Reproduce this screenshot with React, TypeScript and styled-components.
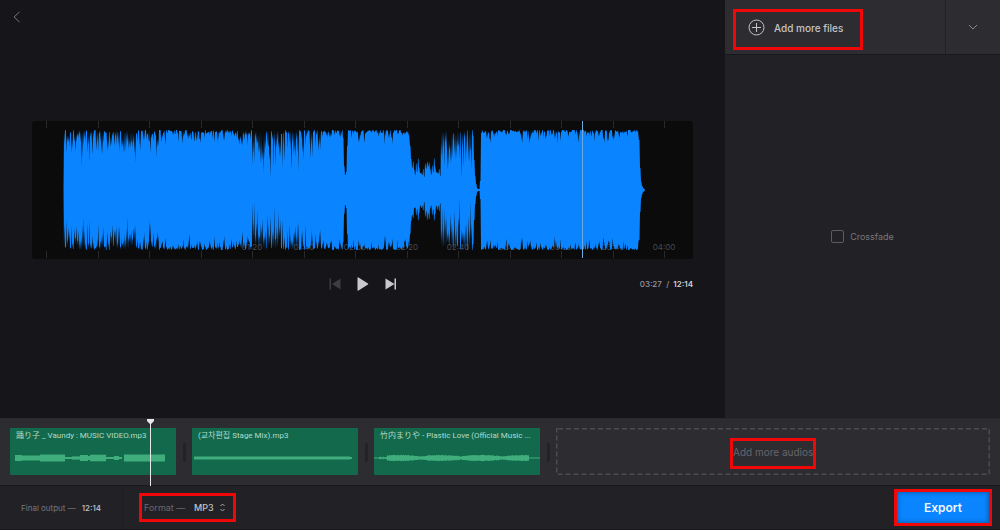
import React from "react";
import styled, { createGlobalStyle } from "styled-components";

const color = {
  editor: "#16151a",
  panel: "#222126",
  raised: "#2d2c31",
  line: "#19181d",
  well: "#0b0b0c",
  blue: "#0a84ff",
  clip: "#12694c",
  clipWave: "#3fae7c",
  muted: "#66656b",
  text: "#c4c4c7",
  mark: "#f00808",
};

const GlobalStyle = createGlobalStyle`
  * { box-sizing: border-box; }
  body {
    margin: 0;
    background: ${color.editor};
    color: ${color.text};
    font-family: Inter, "Noto Sans CJK JP", "Noto Sans CJK KR", sans-serif;
    font-size: 9px;
    line-height: 12px;
  }
  button, select, input { font: inherit; color: inherit; margin: 0; }
  button { border: 0; background: none; padding: 0; cursor: pointer; }
`;

const Page = styled.div`
  min-height: 100vh;
  display: flex;
  flex-direction: column;
`;

const Workspace = styled.div`
  flex: 1;
  display: grid;
  grid-template-columns: minmax(0, 1fr) 275px;
`;

const Editor = styled.main`
  display: grid;
  grid-template-rows: 34px 1fr 34px;
`;

const BackButton = styled.button`
  width: 34px;
  display: grid;
  place-items: center;
  color: #77767b;
`;

const Player = styled.section`
  align-self: center;
  padding: 0 32px;
  display: flex;
  flex-direction: column;
  gap: 12px;
`;

const WaveView = styled.svg`
  display: block;
  width: 100%;
  height: auto;
  background: ${color.well};
  border-radius: 3px;
`;

const PlayerBar = styled.div`
  height: 26px;
  display: grid;
  grid-template-columns: 1fr auto 1fr;
  align-items: center;
`;

const Transport = styled.div`
  grid-column: 2;
  display: flex;
  align-items: center;
  gap: 12px;
`;

const TransportButton = styled.button`
  display: grid;
  place-items: center;
  width: 16px;
  height: 16px;
  color: #c9c9cb;
  &:disabled { color: #3d3c41; }
`;

const Time = styled.div`
  justify-self: end;
  font-size: 8px;
  font-weight: 500;
  color: #98979c;
  white-space: pre;
  strong { font-weight: 600; color: #d2d2d4; }
`;

const Sidebar = styled.aside`
  display: flex;
  flex-direction: column;
  background: ${color.panel};
`;

const SidebarHeader = styled.div`
  height: 55px;
  display: flex;
  background: ${color.raised};
  border-bottom: 1px solid ${color.line};
`;

const AddArea = styled.div`
  flex: 1;
  padding: 9px 8px 4px;
`;

const Callout = styled.div<{ $w: number; $h: number }>`
  width: ${(p) => p.$w}px;
  height: ${(p) => p.$h}px;
  border: 3px solid ${color.mark};
  display: flex;
  align-items: center;
`;

const AddFilesButton = styled.button`
  flex: 1;
  height: 100%;
  padding: 0 0 4px 12px;
  display: flex;
  align-items: center;
  gap: 9px;
  font-size: 10px;
  font-weight: 500;
`;

const ExpandButton = styled.button`
  width: 55px;
  border-left: 1px solid #222126;
  display: grid;
  place-items: center;
  color: #8a898e;
`;

const Options = styled.div`
  flex: 1;
  display: grid;
  place-items: center;
`;

const CheckLabel = styled.label`
  display: flex;
  align-items: center;
  gap: 6px;
  color: #77767b;
`;

const CheckBox = styled.input`
  appearance: none;
  width: 13px;
  height: 13px;
  border: 1px solid #5d5c62;
  border-radius: 2px;
  &:checked { background: ${color.blue}; }
`;

const Timeline = styled.section`
  position: relative;
  display: flex;
  height: 68px;
  padding: 9px 10px;
  background: ${color.raised};
  border-top: 1px solid #29282d;
  border-bottom: 1px solid ${color.line};
`;

const Clip = styled.article`
  flex: 0 0 166px;
  height: 47px;
  background: ${color.clip};
  border-radius: 1px;
  overflow: hidden;
`;

const ClipTitle = styled.div`
  padding: 2px 6px;
  font-family: Roboto, "Noto Sans CJK JP", "Noto Sans CJK KR", sans-serif;
  font-size: 8px;
  color: #b4dbc9;
  white-space: nowrap;
`;

const ClipWave = styled.svg`
  display: block;
  width: 100%;
  height: 30px;
  fill: ${color.clipWave};
`;

const Handle = styled.div`
  flex: 0 0 16px;
  display: grid;
  place-items: center;
  &::before {
    content: "";
    width: 3px;
    height: 19px;
    border-radius: 1px;
    background: #232227;
  }
`;

const DropZone = styled.div`
  position: relative;
  flex: 1;
  height: 47px;
  padding-top: 3px;
  display: grid;
  place-items: center;
`;

const DropOutline = styled.svg`
  position: absolute;
  inset: 0;
  width: 100%;
  height: 100%;
`;

const AddAudiosButton = styled.button`
  flex: 1;
  position: relative;
  height: 100%;
  padding-bottom: 3px;
  font-size: 10px;
  color: ${color.muted};
  white-space: nowrap;
`;

const Playhead = styled.svg`
  position: absolute;
  top: 0;
  left: 147px;
`;

const Footer = styled.footer`
  height: 44px;
  display: flex;
  align-items: center;
  background: ${color.panel};
  border-bottom: 1px solid ${color.line};
  padding-right: 8px;
`;

const Output = styled.div`
  width: 123px;
  height: 100%;
  padding-left: 21px;
  display: flex;
  align-items: center;
  gap: 6px;
  font-size: 8px;
  color: #77767b;
  border-right: 1px solid #1e1d22;
  strong { font-weight: 500; color: ${color.text}; }
`;

const FormatSlot = styled.div`
  flex: 1;
  padding-left: 16px;
`;

const FormatLabel = styled.label`
  padding-left: 2px;
  width: 52px;
  color: #69686e;
  white-space: nowrap;
`;

const FormatSelect = styled.select`
  appearance: none;
  border: 0;
  background: none;
  padding: 0;
  width: 26px;
  font-weight: 500;
`;

const ExportButton = styled.button`
  flex: 1;
  height: 100%;
  background: ${color.blue};
  box-shadow: inset 0 0 4px 1px #0a5fb4;
  color: #eef6ff;
  font-size: 12px;
  font-weight: 600;
`;

/* Main waveform: each section is [from, to, usual dip, deepest dip, chance of a deep dip]. */
const HALF = 60;
const MID = 69;
const sections: [number, number, number, number, number][] = [
  [32, 62, 3, 38, 0.85],
  [62, 128, 4, 36, 0.75],
  [128, 220, 4, 18, 0.45],
  [220, 244, 5, 56, 0.95],
  [244, 268, 4, 52, 0.85],
  [268, 290, 3, 32, 0.65],
  [290, 311, 3, 14, 0.4],
  [316, 378, 4, 18, 0.4],
  [409, 441, 4, 54, 0.9],
  [449, 607, 3, 15, 0.4],
];

const noise = (n: number) => {
  const v = Math.sin(n * 127.1 + 11.7) * 43758.5453;
  return v - Math.floor(v);
};

/* Returns the level at x and the level of the narrow notch just after it. */
const levels = (x: number, side: number): [number, number] => {
  const flat = (v: number): [number, number] => [v, v];
  if (x >= 311 && x < 316) return flat([52, 24, 15, 18, 44][x - 311]);
  if (x >= 378 && x < 409) {
    if (x < 380) return flat(x === 378 ? 44 : 31);
    const peaks = [25, 29, 21, 18, 27, 20, 32, 24, 18, 20, 17, 22, 15, 29, 24, 31];
    return flat(peaks[(x - 380) % 16] - 3 * noise(x + side));
  }
  if (x >= 441 && x < 449) return flat([54, 30, 14, 6, 2, 1, 1, 9][x - 441]);
  if (x >= 607) return flat([50, 22, 8, 4, 2, 1][x - 607] ?? 0);
  const s = sections.find(([from, to]) => x >= from && x < to);
  if (!s) return [0, 0];
  const [, , usual, deep, chance] = s;
  const r = noise(x * 3 + side * 977);
  const hit = noise(x * 7 + 5) < chance;
  const dip = hit ? deep * (0.2 + 0.8 * r) * (0.5 + 0.5 * noise(x)) : 0;
  const body = HALF - usual * r * r - (noise(x * 5) > 0.6 ? dip * 0.4 : 0);
  return [body, Math.min(body, HALF - dip)];
};

const wavePath = () => {
  const trace = (side: number, sign: number) => {
    const points: string[] = [];
    for (let x = 31; x <= 613; x += 1) {
      const [body, notch] = levels(x, side);
      points.push(`${x},${(MID + sign * body).toFixed(1)}`);
      points.push(`${x + 0.5},${(MID + sign * notch).toFixed(1)}`);
    }
    return points;
  };
  return `M${trace(0, -1).join("L")}L${trace(1, 1).reverse().join("L")}Z`;
};

const ticks = Array.from({ length: 13 }, (_, i) => Math.round(14 + i * 51.5));
const tickLabel = (i: number) =>
  `0${Math.floor(i / 3)}:${["00", "20", "40"][i % 3]}`;

function MainWave() {
  return (
    <WaveView viewBox="0 0 661 138" role="img" aria-label="Waveform">
      {ticks.map((x, i) => (
        <g key={x}>
          <rect x={x} y="0" width="1" height="7" fill="#29292b" />
          <rect x={x} y="130" width="1" height="7" fill="#29292b" />
          {i > 3 && (
            <text x={x} y="129" fontSize="8" textAnchor="middle" fill="#48484b">
              {tickLabel(i)}
            </text>
          )}
        </g>
      ))}
      <path d={wavePath()} fill={color.blue} />
      <rect x="550" y="0" width="1" height="137" fill="#6fa9e0" />
    </WaveView>
  );
}

const bars = (list: number[][]) =>
  list.map(([from, to, half]) => (
    <rect key={from} x={from} y={14 - half} width={to - from} height={half * 2} />
  ));

const ripple = Array.from({ length: 150 }, (_, i) => {
  const base = i < 8 ? 0.6 : 1.3 + 1.3 * Math.abs(Math.sin(i / 13));
  return [5 + i, 6 + i, base + noise(i) * 0.7];
});

const clips = [
  {
    title: "踊り子 _ Vaundy : MUSIC VIDEO.mp3",
    wave: [[5, 12, 3], [12, 30, 2.5], [30, 55, 3.5], [55, 62, 1], [62, 70, 1.6], [70, 78, 3], [78, 80, 2], [80, 96, 3.3], [96, 104, 1], [104, 109, 2], [109, 112, 1], [114, 155, 3.5]],
  },
  { title: "(교차편집 Stage Mix).mp3", wave: [[2, 158, 1.5], [158, 160, 1]] },
  {
    title: "竹内まりや - Plastic Love (Official Music ...",
    wave: [[0, 5, 0.5], ...ripple, [155, 166, 0.5]],
  },
];

export default function App() {
  return (
    <>
      <GlobalStyle />
      <Page>
        <Workspace>
          <Editor>
            <BackButton aria-label="Back">
              <svg width="10" height="12" viewBox="0 0 10 12" fill="none" stroke="currentColor">
                <path d="M7.5 1L2 6l5.500 5" />
              </svg>
            </BackButton>
            <Player>
              <MainWave />
              <PlayerBar>
                <Transport>
                  <TransportButton aria-label="Previous" disabled>
                    <svg width="12" height="12" fill="currentColor">
                      <path d="M.5.5H2v11H.5zM11.500.5v11L3 6z" />
                    </svg>
                  </TransportButton>
                  <TransportButton aria-label="Play">
                    <svg width="12" height="14" fill="currentColor">
                      <path d="M1.500.5Q.5 0 .5 1v12q0 1 1 .5L11 7.500q.5-.5 0-1z" />
                    </svg>
                  </TransportButton>
                  <TransportButton aria-label="Next">
                    <svg width="12" height="12" fill="currentColor">
                      <path d="M9.500.5H11v11H9.500zM.5.5v11L9.500 6z" />
                    </svg>
                  </TransportButton>
                </Transport>
                <Time>
                  03:27{"  /  "}
                  <strong>12:14</strong>
                </Time>
              </PlayerBar>
            </Player>
          </Editor>
          <Sidebar>
            <SidebarHeader>
              <AddArea>
                <Callout $w={130} $h={41}>
                  <AddFilesButton>
                    <svg width="17" height="17" viewBox="0 0 17 17" fill="none" stroke="currentColor">
                      <circle cx="8.5" cy="8.500" r="7.500" />
                      <path d="M4 8.500h9M8.500 4v9" />
                    </svg>
                    Add more files
                  </AddFilesButton>
                </Callout>
              </AddArea>
              <ExpandButton aria-label="Show more">
                <svg width="10" height="6" viewBox="0 0 10 6" fill="none" stroke="currentColor">
                  <path d="M1 1l4 4 4-4" />
                </svg>
              </ExpandButton>
            </SidebarHeader>
            <Options>
              <CheckLabel>
                <CheckBox type="checkbox" />
                Crossfade
              </CheckLabel>
            </Options>
          </Sidebar>
        </Workspace>
        <Timeline>
          {clips.map((clip) => (
            <React.Fragment key={clip.title}>
              <Clip>
                <ClipTitle>{clip.title}</ClipTitle>
                <ClipWave viewBox="0 0 166 30">{bars(clip.wave)}</ClipWave>
              </Clip>
              <Handle />
            </React.Fragment>
          ))}
          <DropZone>
            <DropOutline>
              <rect x="0" y="0" width="100%" height="100%" rx="2" fill="none" stroke="#4c4b51" strokeWidth="3" strokeDasharray="5 3" />
            </DropOutline>
            <Callout $w={86} $h={31}>
              <AddAudiosButton>Add more audios</AddAudiosButton>
            </Callout>
          </DropZone>
          <Playhead width="7" height="67" fill="#e8e8ea">
            <path d="M0 0h7v2L4 5v62H3V5L0 2z" />
          </Playhead>
        </Timeline>
        <Footer>
          <Output>
            Final output — <strong>12:14</strong>
          </Output>
          <FormatSlot>
            <Callout $w={97} $h={29}>
              <FormatLabel htmlFor="format">Format —</FormatLabel>
              <FormatSelect id="format" defaultValue="MP3">
                <option>MP3</option>
                <option>WAV</option>
              </FormatSelect>
              <svg width="5" height="9" viewBox="0 0 5 9" fill="none" stroke="#a5a5a9">
                <path d="M.5 3l2-2 2 2M.5 6l2 2 2-2" />
              </svg>
            </Callout>
          </FormatSlot>
          <Callout $w={98} $h={37}>
            <ExportButton>Export</ExportButton>
          </Callout>
        </Footer>
      </Page>
    </>
  );
}
